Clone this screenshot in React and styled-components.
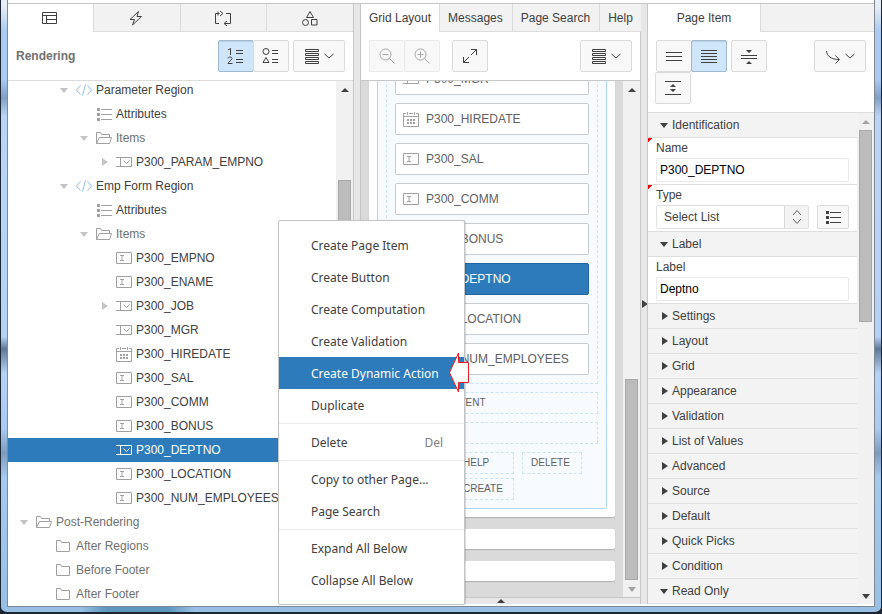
import React from "react";
import styled, { createGlobalStyle, css } from "styled-components";

const GlobalStyle = createGlobalStyle`
  * {
    box-sizing: border-box;
  }
  body {
    margin: 0;
    background: #1d2633;
    font-family: "Liberation Sans", Arial, sans-serif;
    font-size: 12px;
    line-height: 16px;
    color: #404040;
  }
  button, input, select {
    font: inherit;
    color: inherit;
    margin: 0;
  }
  ul {
    list-style: none;
    margin: 0;
    padding: 0;
  }
`;

/* window frame */

const Frame = styled.div`
  position: relative;
  height: 100vh;
  padding: 0 6px 5px;
  border: solid #1d2633;
  border-width: 0 1px 2px;
  border-radius: 0 0 7px 7px;
  background:
    linear-gradient(90deg, transparent 9%, #5f97bd 12%, #5f97bd 19%, transparent 22%) bottom / 100% 5px no-repeat,
    linear-gradient(#e8eef6 1%, #a9cbf0 5%, #a9cbf0 13%, #7f9fc4 16%, #b9d5f5 19%, #b3d3f6 55%, #5f7897 57%, #b3d3f6 61%, #a9cbf0 70%, #7c9cbe 74%, #a6c9ee 78%, #98c0e4 100%);
`;

const Workspace = styled.div`
  height: 100%;
  display: flex;
  flex-direction: column;
  padding-bottom: 2px;
  border: solid #7d8894;
  border-width: 0 1px 1px;
  background: #fff;
`;

const TopStrip = styled.div`
  height: 4px;
  flex: none;
  border-bottom: 1px solid #c6c6c6;
`;

const Columns = styled.main`
  flex: 1;
  min-height: 0;
  display: grid;
  grid-template-columns: minmax(0, 346fr) 6px minmax(0, 281fr) 6px minmax(0, 227fr);
`;

const Pane = styled.section`
  display: flex;
  flex-direction: column;
  min-height: 0;
  background: #fff;
  border: solid #c6c6c6;
  border-width: ${(p) => p.$edges};
`;

const Splitter = styled.div`
  display: flex;
  align-items: center;
  justify-content: center;
  background: #e7e7e7;
`;

/* tabs and toolbars */

const TabBar = styled.div`
  display: flex;
  flex: none;
  height: 28px;
  background: #f2f2f2;
`;

const Tab = styled.button`
  display: flex;
  align-items: center;
  justify-content: center;
  flex: ${(p) => (p.$fill ? "1" : "none")};
  width: ${(p) => p.$width || "auto"};
  padding: 0 9px 0 8px;
  border: solid #dcdcdc;
  border-width: 0 0 1px 1px;
  background: #f2f2f2;
  white-space: nowrap;
  ${(p) =>
    p.$active &&
    css`
      padding: 0 8px;
      border-color: transparent;
      border-left-width: 0;
      background: #fff;
    `}
`;

const TabFiller = styled.div`
  flex: 1;
  border: solid #dcdcdc;
  border-width: 0 0 1px 1px;
`;

const Toolbar = styled.div`
  display: flex;
  flex: none;
  align-items: ${(p) => (p.$top ? "flex-start" : "center")};
  padding: 8px;
  border-bottom: 1px solid ${(p) => p.$line || "#dcdcdc"};
`;

const WrapTools = styled.div`
  display: flex;
  flex-wrap: wrap;
  column-gap: 4px;
  width: 120px;
`;

const Spacer = styled.div`
  flex: 1;
`;

const PaneTitle = styled.h2`
  flex: 1;
  margin: 0;
  font-size: 12px;
  color: #707070;
`;

const ButtonGroup = styled.div`
  display: flex;
  margin-right: ${(p) => p.$after || 0}px;
`;

const ToolButton = styled.button`
  display: flex;
  align-items: center;
  justify-content: center;
  gap: 4px;
  width: ${(p) => (p.$wide ? 52 : 36)}px;
  height: 32px;
  padding: 0;
  border: 1px solid #dadada;
  border-radius: 2px;
  background: #f8f8f8;

  & + & {
    margin-left: -1px;
  }
  &:disabled {
    border-color: #ebebeb;
    color: #a6a6a6;
  }
  ${(p) =>
    p.$active &&
    css`
      border-color: #9fb9d1;
      background: #cfe5fa;
      box-shadow: inset 0 1px 1px rgba(0, 0, 0, 0.1);
    `}
`;

const Glyph = styled.svg`
  display: block;
  flex: none;
  fill: none;
  stroke: currentColor;
  stroke-width: 1;
`;

/* scroll bars */

const Scrolling = styled.div`
  display: flex;
  flex: 1;
  min-height: 0;
`;

const ScrollTrack = styled.div`
  display: flex;
  flex-direction: column;
  align-items: center;
  flex: none;
  width: 17px;
  background: #f1f1f1;
`;

const ScrollArrow = styled.div`
  display: flex;
  align-items: center;
  justify-content: center;
  flex: none;
  height: 17px;
  color: ${(p) => (p.$off ? "#a3a3a3" : "#404040")};
`;

const ScrollThumb = styled.div`
  width: 13px;
  flex: ${(p) => p.$size};
  background: #bcbcbc;
  border: 1px solid #a8a8a8;
`;

const ScrollGap = styled.div`
  flex: ${(p) => p.$size};
`;

/* rendering tree */

const TreeView = styled.div`
  flex: 1;
  min-width: 0;
  overflow: hidden;
`;

const TreeList = styled.ul`
  margin-top: -3px;
`;

const TreeRow = styled.li`
  display: flex;
  align-items: center;
  gap: 4px;
  height: 24px;
  padding-left: ${(p) => 8 + p.$level * 20}px;
  white-space: nowrap;
  color: ${(p) => (p.$muted ? "#707070" : "#404040")};
  ${(p) =>
    p.$selected &&
    css`
      background: #2d7bbb;
      color: #fff;
    `}
`;

const TreeToggle = styled.span`
  display: flex;
  justify-content: center;
  width: 16px;
  color: #c4c4c4;
`;

const TreeIcon = styled.span`
  display: flex;
  width: 16px;
  color: ${(p) => p.$color};
`;

/* grid layout canvas */

const Canvas = styled.div`
  flex: 1;
  min-width: 0;
  display: flex;
  flex-direction: column;
  justify-content: flex-end;
  gap: 12px;
  padding: 0 8px 16px;
  overflow: hidden;
  background: #dadada;
`;

const Card = styled.div`
  flex: none;
  min-height: 20px;
  padding: ${(p) => (p.$empty ? 0 : 8)}px;
  border-radius: 2px;
  background: #fff;
  box-shadow: 0 1px 1px rgba(0, 0, 0, 0.2);
`;

const Region = styled.div`
  display: flex;
  flex-direction: column;
  gap: 8px;
  padding: 8px;
  border: 1px solid #b0d6f5;
  border-radius: 2px;
  background: #f7fbff;
`;

const DropZone = styled.div`
  display: flex;
  flex-direction: column;
  gap: 8px;
  padding: 8px;
  border: 1px dashed #cbe3f8;
`;

const Slot = styled.div`
  width: ${(p) => (p.$button ? "60px" : "auto")};
  height: 22px;
  padding: 0 8px;
  border: 1px dashed #cbe3f8;
  font-size: 10px;
  line-height: 20px;
  color: #606060;
`;

const SlotRow = styled.div`
  display: flex;
  flex-wrap: wrap;
  gap: 4px 8px;
`;

const GridItem = styled.div`
  display: flex;
  align-items: center;
  gap: 7px;
  height: 32px;
  padding: 0 7px;
  border: 1px solid ${(p) => (p.$selected ? "#22669f" : "#c9cccf")};
  border-radius: 2px;
  background: ${(p) => (p.$selected ? "#2d7bbb" : "#fff")};
  color: ${(p) => (p.$selected ? "#fff" : "#606060")};
`;

const CollapseBar = styled.div`
  display: flex;
  align-items: center;
  justify-content: center;
  flex: none;
  height: 7px;
  border-top: 1px solid #c6c6c6;
  background: #e7e7e7;
`;

/* property editor */

const Properties = styled.div`
  flex: 1;
  min-width: 0;
  overflow: hidden;
`;

const GroupHeader = styled.button`
  display: flex;
  align-items: center;
  gap: 4px;
  width: 100%;
  height: 25px;
  padding: 0 12px;
  border: 0;
  border-bottom: 1px solid #dedede;
  background: #f3f3f3;
`;

const Property = styled.div`
  height: 47px;
  padding: 2px 8px;
  border-bottom: 1px solid #dedede;
  background: ${(p) =>
    p.$required ? "linear-gradient(135deg, #f00 3px, transparent 3px)" : "none"};
`;

const PropertyLabel = styled.label`
  display: block;
  height: 18px;
`;

const TextInput = styled.input`
  display: block;
  width: 100%;
  height: 24px;
  padding: 0 3px;
  border: 1px solid #e8e8e8;
  border-radius: 2px;
  background: #fff;
  color: #000;
`;

const FieldRow = styled.div`
  display: flex;
  gap: 8px;
`;

const Combo = styled.div`
  display: flex;
  flex: 1;
  height: 24px;
  border: 1px solid #e0e0e0;
  border-radius: 2px;
`;

const Select = styled.select`
  appearance: none;
  flex: 1;
  min-width: 0;
  padding: 0 7px;
  border: 0;
  background: #fff;
`;

const ComboArrows = styled.span`
  display: flex;
  align-items: center;
  justify-content: center;
  width: 24px;
  border-left: 1px solid #dadada;
  background: #f3f3f3;
  color: #606060;
`;

const QuickPick = styled(ToolButton)`
  width: 32px;
  height: 24px;
`;

/* context menu */

const ContextMenu = styled.div`
  position: absolute;
  left: 277px;
  top: 220px;
  width: 187px;
  padding: 8px 0;
  border: 1px solid #c4c4c4;
  border-radius: 2px;
  background: #fff;
  box-shadow: 1px 0 1px rgba(0, 0, 0, 0.15);
  font-family: "Noto Sans", "Open Sans", sans-serif;
`;

const MenuItem = styled.button`
  display: flex;
  align-items: center;
  justify-content: space-between;
  width: 100%;
  height: 32px;
  padding: 2px 21px 0 32px;
  border: 0;
  background: ${(p) => (p.$active ? "#2d7bbb" : "transparent")};
  color: ${(p) => (p.$active ? "#fff" : "#404040")};
`;

const Shortcut = styled.span`
  color: #808080;
`;

const MenuLine = styled.div`
  height: 1px;
  margin: 2px 0;
  background: #ebebeb;
`;

const Pointer = styled(Glyph)`
  position: absolute;
  left: 447px;
  top: 352px;
`;

const Triangle = ({ dir, size = 8 }) => {
  const shapes = {
    up: "0,6 4,2 8,6",
    down: "0,2 8,2 4,7",
    right: "2,0 8,4 2,8",
  };
  return (
    <Glyph width={size} height={size} viewBox="0 0 8 8">
      <polygon points={shapes[dir]} fill="currentColor" stroke="none" />
    </Glyph>
  );
};

const paths = {
  layout: "M.5 2.5h14v11H.5zM.5 5.5h14M4.5 5.5v8M4.5 9.5h10",
  bolt: "M10.5 1.5L2 9.5h4.5L4.5 15l9-8.5H9z",
  process: "M4.500 3.500H.5v10H4M11 3.500h4.500v10H10M5 1l3 2.500L5 6M3 1.500v4M12 11l-3 2.500 3 2.500",
  shared: "M8 1.500L11.500 7.500h-7zM9.500 9.500h5.500v5.500H9.500z",
  byOrder: "M9 3.500h7M9 6.500h7M9 12.500h7M9 15.500h7",
  byType: "M10 3.500h6M10 6.500h6M10 12.500h6M10 15.500h6M4 10.500l3 5H1z",
  stack: "M1.500 1.500h13v2h-13zM1.500 5.500h13v2h-13zM1.500 9.500h13v2h-13zM1.500 13.500h13v2h-13z",
  chevron: "M.5 3l4.500 4 4.500-4",
  expand: "M9 1.500h5.500V7M14.500 1.500l-5.500 5.500M1.500 9v5.500H7M1.500 14.500L7 9",
  lines: "M0 4.500h16M0 8.500h16M0 12.500h16",
  dense: "M0 2.500h16M0 5.500h16M0 8.500h16M0 11.500h16M0 14.500h16",
  goto: "M1.500 3C2 8 6 11.500 14 11.500M10.500 7.500l4 4-4 4",
  updown: "M1 6l4-4.500L9 6M1 10l4 4.500L9 10",
  code: "M4.500 3.500L.5 8l4 4.500M11.500 3.500l4 4.500-4 4.500M9.500 2.500l-3 11",
  folder: "M.5 13.500v-11h4l1 2h8v9z",
  openFolder: "M.5 13.500v-11h4l1 2h8v3M.5 13.500L3.500 7.500h12l-2 6z",
  text: "M.5 2.500h15v11H.5zM4 5.500h4M4 10.500h4M6 5.500v5",
  select: "M0 3.500h15.500v9H0M4.500 3.500v9M7.500 6.500l3 3 3-3",
};

const Icon = ({ name, width = 16, height = 16 }) => (
  <Glyph width={width} height={height} viewBox={`0 0 ${width} ${height}`}>
    <path d={paths[name]} />
  </Glyph>
);

const ListIcon = () => (
  <Glyph width="16" height="16" viewBox="0 0 16 16">
    <path d="M5 3.500h11M5 8.500h11M5 13.500h11" />
    <path d="M1 2h3v3H1zM1 7h3v3H1zM1 12h3v3H1z" fill="currentColor" stroke="none" />
  </Glyph>
);

const DateIcon = () => (
  <Glyph width="16" height="16" viewBox="0 0 16 16">
    <path d="M.5 2.500v13h15v-13M.5 5.500h15M.5 2.500H3M6 2.500h4M13 2.500h2.500M4.500 1v3M11.500 1v3" />
    <path
      d="M4 8h2v2H4zM7 8h2v2H7zM10 8h2v2h-2zM4 11h2v2H4zM7 11h2v2H7zM10 11h2v2h-2z"
      fill="currentColor"
      stroke="none"
    />
  </Glyph>
);

const SharedIcon = () => (
  <Glyph width="16" height="16" viewBox="0 0 16 16">
    <path d={paths.shared} />
    <circle cx="3.500" cy="12.500" r="3" />
  </Glyph>
);

const OrderIcon = () => (
  <Glyph width="18" height="18" viewBox="0 0 18 18">
    <path d={paths.byOrder} />
    <path d="M1 3L3.500 1.500V8M1 11.500c0-2 4-2 4 0C5 13 1 15 1 16.500h4.500" />
  </Glyph>
);

const TypeIcon = () => (
  <Glyph width="18" height="18" viewBox="0 0 18 18">
    <path d={paths.byType} />
    <circle cx="4" cy="4.500" r="3" />
  </Glyph>
);

const ZoomIcon = ({ plus }) => (
  <Glyph width="18" height="18" viewBox="0 0 18 18">
    <circle cx="7.500" cy="7.500" r="5.500" />
    <path d="M11.500 11.500l5 5M4.500 7.500h6" />
    {plus && <path d="M7.500 4.500v6" />}
  </Glyph>
);

const CollapseIcon = ({ open }) => (
  <Glyph width="16" height="16" viewBox="0 0 16 16">
    {open ? <path d="M0 1.500h16M0 14.500h16" /> : <path d="M0 7.500h16M0 10.500h16" />}
    <path
      d={open ? "M5 7l3-3 3 3zM5 9l3 3 3-3z" : "M5 2h6L8 5zM5 16h6l-3-3z"}
      fill="currentColor"
      stroke="none"
    />
  </Glyph>
);

const MenuButton = ({ label, name = "stack" }) => (
  <ToolButton $wide aria-label={label}>
    <Icon name={name} />
    <Icon name="chevron" width={10} height={10} />
  </ToolButton>
);

const icons = {
  list: <ListIcon />,
  date: <DateIcon />,
};

const itemIcon = (type) => icons[type] || <Icon name={type} />;

const tree = [
  { level: 2, label: "Parameter Region", icon: "code", toggle: "down" },
  { level: 3, label: "Attributes", icon: "list" },
  { level: 3, label: "Items", icon: "openFolder", toggle: "down", muted: true },
  { level: 4, label: "P300_PARAM_EMPNO", icon: "select", toggle: "right" },
  { level: 2, label: "Emp Form Region", icon: "code", toggle: "down" },
  { level: 3, label: "Attributes", icon: "list" },
  { level: 3, label: "Items", icon: "openFolder", toggle: "down", muted: true },
  { level: 4, label: "P300_EMPNO", icon: "text" },
  { level: 4, label: "P300_ENAME", icon: "text" },
  { level: 4, label: "P300_JOB", icon: "select", toggle: "right" },
  { level: 4, label: "P300_MGR", icon: "select" },
  { level: 4, label: "P300_HIREDATE", icon: "date" },
  { level: 4, label: "P300_SAL", icon: "text" },
  { level: 4, label: "P300_COMM", icon: "text" },
  { level: 4, label: "P300_BONUS", icon: "text" },
  { level: 4, label: "P300_DEPTNO", icon: "select", selected: true },
  { level: 4, label: "P300_LOCATION", icon: "text" },
  { level: 4, label: "P300_NUM_EMPLOYEES", icon: "text" },
  { level: 0, label: "Post-Rendering", icon: "openFolder", toggle: "down", muted: true },
  { level: 1, label: "After Regions", icon: "folder", muted: true },
  { level: 1, label: "Before Footer", icon: "folder", muted: true },
  { level: 1, label: "After Footer", icon: "folder", muted: true },
];

const gridItems = tree.slice(10, 18);

const groups = [
  "Settings",
  "Layout",
  "Grid",
  "Appearance",
  "Validation",
  "List of Values",
  "Advanced",
  "Source",
  "Default",
  "Quick Picks",
  "Condition",
];

const iconColor = (row) => {
  if (row.selected) return "#fff";
  return row.icon === "code" ? "#8dbdf0" : "#a0a0a0";
};

const RenderingPane = () => (
  <Pane $edges="0 1px 0 0">
    <TabBar>
      <Tab $active $fill aria-label="Rendering">
        <Icon name="layout" />
      </Tab>
      <Tab $fill aria-label="Dynamic Actions">
        <Icon name="bolt" />
      </Tab>
      <Tab $fill aria-label="Processing">
        <Icon name="process" />
      </Tab>
      <Tab $fill aria-label="Shared Components">
        <SharedIcon />
      </Tab>
    </TabBar>
    <Toolbar>
      <PaneTitle>Rendering</PaneTitle>
      <ButtonGroup $after={4}>
        <ToolButton $active aria-label="Group by Processing Order">
          <OrderIcon />
        </ToolButton>
        <ToolButton aria-label="Group by Component Type">
          <TypeIcon />
        </ToolButton>
      </ButtonGroup>
      <MenuButton label="Rendering menu" />
    </Toolbar>
    <Scrolling>
      <TreeView>
        <TreeList>
          {tree.map((row, i) => (
            <TreeRow key={i} $level={row.level} $muted={row.muted} $selected={row.selected}>
              <TreeToggle>{row.toggle && <Triangle dir={row.toggle} />}</TreeToggle>
              <TreeIcon $color={iconColor(row)}>{itemIcon(row.icon)}</TreeIcon>
              {row.label}
            </TreeRow>
          ))}
        </TreeList>
      </TreeView>
      <ScrollTrack>
        <ScrollArrow>
          <Triangle dir="up" />
        </ScrollArrow>
        <ScrollGap $size={82} />
        <ScrollThumb $size={200} />
        <ScrollGap $size={207} />
        <ScrollArrow>
          <Triangle dir="down" />
        </ScrollArrow>
      </ScrollTrack>
    </Scrolling>
  </Pane>
);

const LayoutPane = () => (
  <Pane $edges="0 1px">
    <TabBar>
      <Tab $active>Grid Layout</Tab>
      <Tab>Messages</Tab>
      <Tab>Page Search</Tab>
      <Tab $fill>Help</Tab>
    </TabBar>
    <Toolbar $line="#c6c6c6">
      <ButtonGroup $after={12}>
        <ToolButton disabled aria-label="Zoom Out">
          <ZoomIcon />
        </ToolButton>
        <ToolButton disabled aria-label="Zoom In">
          <ZoomIcon plus />
        </ToolButton>
      </ButtonGroup>
      <ToolButton aria-label="Expand">
        <Icon name="expand" />
      </ToolButton>
      <Spacer />
      <MenuButton label="Layout menu" />
    </Toolbar>
    <Scrolling>
      <Canvas>
        <Card>
          <Region>
            <DropZone>
              {gridItems.map((item) => (
                <GridItem key={item.label} $selected={item.selected}>
                  <TreeIcon $color={iconColor(item)}>{itemIcon(item.icon)}</TreeIcon>
                  {item.label}
                </GridItem>
              ))}
            </DropZone>
            <Slot>REGION CONTENT</Slot>
            <Slot />
            <SlotRow>
              <Slot $button />
              <Slot $button>HELP</Slot>
              <Slot $button>DELETE</Slot>
              <Slot $button />
              <Slot $button>CREATE</Slot>
            </SlotRow>
          </Region>
        </Card>
        <Card $empty />
        <Card $empty />
      </Canvas>
      <ScrollTrack>
        <ScrollArrow>
          <Triangle dir="up" />
        </ScrollArrow>
        <ScrollGap $size={282} />
        <ScrollThumb $size={200} />
        <ScrollArrow $off>
          <Triangle dir="down" />
        </ScrollArrow>
      </ScrollTrack>
    </Scrolling>
    <CollapseBar>
      <Triangle dir="up" />
    </CollapseBar>
  </Pane>
);

const Group = ({ label, open }) => (
  <GroupHeader aria-expanded={!!open}>
    <Triangle dir={open ? "down" : "right"} />
    {label}
  </GroupHeader>
);

const PropertyPane = () => (
  <Pane $edges="0 0 0 1px">
    <TabBar>
      <Tab $active $width="112px">
        Page Item
      </Tab>
      <TabFiller />
    </TabBar>
    <Toolbar $top>
      <WrapTools>
        <ButtonGroup>
          <ToolButton aria-label="Show Common">
            <Icon name="lines" />
          </ToolButton>
          <ToolButton $active aria-label="Show All">
            <Icon name="dense" />
          </ToolButton>
        </ButtonGroup>
        <ToolButton aria-label="Collapse All">
          <CollapseIcon />
        </ToolButton>
        <ToolButton aria-label="Expand All">
          <CollapseIcon open />
        </ToolButton>
      </WrapTools>
      <Spacer />
      <MenuButton label="Go to Group" name="goto" />
    </Toolbar>
    <Scrolling>
      <Properties>
        <Group label="Identification" open />
        <Property $required>
          <PropertyLabel htmlFor="name">Name</PropertyLabel>
          <TextInput id="name" defaultValue="P300_DEPTNO" />
        </Property>
        <Property $required>
          <PropertyLabel htmlFor="type">Type</PropertyLabel>
          <FieldRow>
            <Combo>
              <Select id="type">
                <option>Select List</option>
              </Select>
              <ComboArrows>
                <Icon name="updown" width={10} />
              </ComboArrows>
            </Combo>
            <QuickPick aria-label="Quick Picks">
              <ListIcon />
            </QuickPick>
          </FieldRow>
        </Property>
        <Group label="Label" open />
        <Property>
          <PropertyLabel htmlFor="label">Label</PropertyLabel>
          <TextInput id="label" defaultValue="Deptno" />
        </Property>
        {groups.map((label) => (
          <Group key={label} label={label} />
        ))}
        <Group label="Read Only" open />
      </Properties>
      <ScrollTrack>
        <ScrollArrow $off>
          <Triangle dir="up" />
        </ScrollArrow>
        <ScrollThumb $size={191} />
        <ScrollGap $size={266} />
        <ScrollArrow>
          <Triangle dir="down" />
        </ScrollArrow>
      </ScrollTrack>
    </Scrolling>
  </Pane>
);

const App = () => {
  return (
    <>
      <GlobalStyle />
      <Frame>
        <Workspace>
          <TopStrip />
          <Columns>
            <RenderingPane />
            <Splitter />
            <LayoutPane />
            <Splitter>
              <Triangle dir="right" />
            </Splitter>
            <PropertyPane />
          </Columns>
        </Workspace>
        <ContextMenu>
          <MenuItem>Create Page Item</MenuItem>
          <MenuItem>Create Button</MenuItem>
          <MenuItem>Create Computation</MenuItem>
          <MenuItem>Create Validation</MenuItem>
          <MenuItem $active>Create Dynamic Action</MenuItem>
          <MenuItem>Duplicate</MenuItem>
          <MenuLine />
          <MenuItem>
            Delete <Shortcut>Del</Shortcut>
          </MenuItem>
          <MenuLine />
          <MenuItem>Copy to other Page...</MenuItem>
          <MenuItem>Page Search</MenuItem>
          <MenuLine />
          <MenuItem>Expand All Below</MenuItem>
          <MenuItem>Collapse All Below</MenuItem>
        </ContextMenu>
        <Pointer width="22" height="41" viewBox="0 0 22 41">
          <path d="M1.500 20.500L10.500 1v9.500h10v20h-10V40z" fill="#fff" stroke="#ed1c24" />
        </Pointer>
      </Frame>
    </>
  );
};

export default App;
